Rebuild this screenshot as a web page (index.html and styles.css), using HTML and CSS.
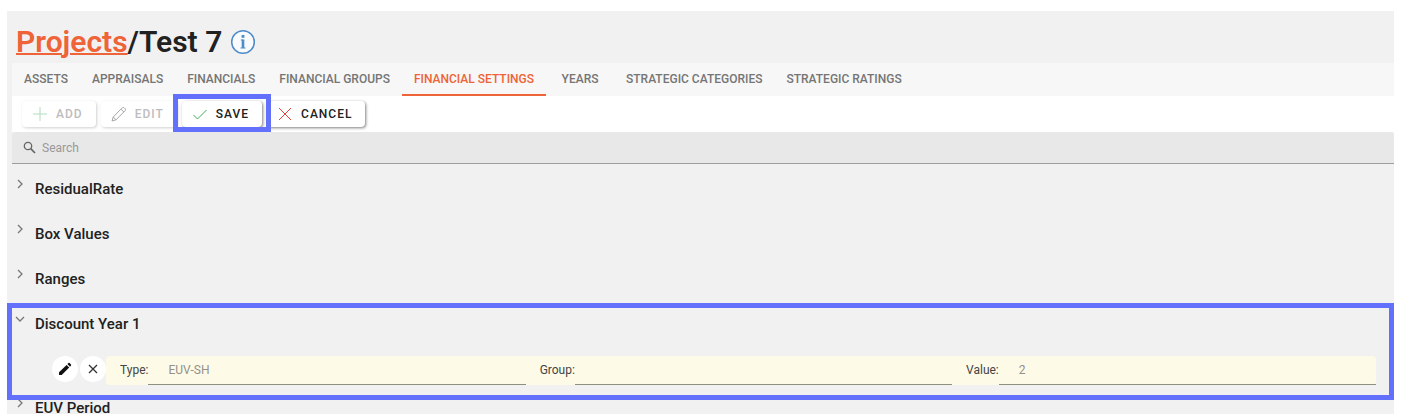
FILE: index.html
```html
<!DOCTYPE html>
<html lang="en">
<head>
<meta charset="utf-8">
<title>Projects / Test 7</title>
<link rel="stylesheet" href="styles.css">
</head>
<body>
<main class="page">
  <header class="page-header">
    <h1 class="title"><a class="title-link" href="#">Projects</a>/Test 7</h1>
    <button class="info" type="button" aria-label="Information">
      <svg width="26" height="26" viewBox="0 0 26 26" fill="none" stroke="#4c8ccb">
        <circle cx="13" cy="13" r="11.3" stroke-width="1.5" fill="#f8fafc"/>
        <path d="M13 10.5V19" stroke-width="2.6"/>
        <path d="M13 6V8.8" stroke-width="2.8"/>
        <path d="M10.8 11H13M10.5 19H15.5" stroke-width="1"/>
      </svg>
    </button>
  </header>
  <nav class="tabs">
    <a class="tab" href="#">ASSETS</a>
    <a class="tab" href="#">APPRAISALS</a>
    <a class="tab" href="#">FINANCIALS</a>
    <a class="tab" href="#">FINANCIAL GROUPS</a>
    <a class="tab tab-active" href="#" aria-current="page">FINANCIAL SETTINGS</a>
    <a class="tab" href="#">YEARS</a>
    <a class="tab" href="#">STRATEGIC CATEGORIES</a>
    <a class="tab" href="#">STRATEGIC RATINGS</a>
  </nav>
  <div class="toolbar">
    <button class="btn" type="button" disabled>
      <svg class="icon" viewBox="0 0 16 16" stroke="#3fae5c"><path d="M8 1V15M1 8H15"/></svg>ADD
    </button>
    <button class="btn" type="button" disabled>
      <svg class="icon" viewBox="0 0 16 16" stroke="#222"><path d="M1 15L2.2 11L11.3 1.8Q12.3 .9 13.3 1.9L14.1 2.7Q15 3.7 14.2 4.6L5 13.8ZM10 3.2L12.8 6M2.2 11L5 13.8"/></svg>EDIT
    </button>
    <div class="marked">
      <button class="btn" type="button">
        <svg class="icon" viewBox="0 0 16 16" stroke="#3fae5c"><path d="M1.5 9L5.5 13L14.5 4"/></svg>SAVE
      </button>
      <span class="marker marker-button"></span>
    </div>
    <button class="btn" type="button">
      <svg class="icon" viewBox="0 0 16 16" stroke="#e0413c"><path d="M2 2L14 14M14 2L2 14"/></svg>CANCEL
    </button>
  </div>
  <label class="search">
    <svg width="14" height="14" viewBox="0 0 14 14" fill="none" stroke="#666"><circle cx="5" cy="5" r="3.7" stroke-width="1.3"/><path d="M7.7 7.7L12 12" stroke-width="1.7"/></svg>
    <input class="search-input" type="text" placeholder="Search" aria-label="Search">
  </label>
  <div class="groups">
    <section class="group">
      <button class="group-head" type="button" aria-expanded="false"><svg class="chevron" viewBox="0 0 10 10"><path d="M3 1L7 5L3 9"/></svg><span class="group-name">ResidualRate</span></button>
    </section>
    <section class="group">
      <button class="group-head" type="button" aria-expanded="false"><svg class="chevron" viewBox="0 0 10 10"><path d="M3 1L7 5L3 9"/></svg><span class="group-name">Box Values</span></button>
    </section>
    <section class="group">
      <button class="group-head" type="button" aria-expanded="false"><svg class="chevron" viewBox="0 0 10 10"><path d="M3 1L7 5L3 9"/></svg><span class="group-name">Ranges</span></button>
    </section>
    <section class="group marked">
      <button class="group-head" type="button" aria-expanded="true"><svg class="chevron" viewBox="0 0 10 10"><path d="M1 3L5 7L9 3"/></svg><span class="group-name">Discount Year 1</span></button>
      <div class="entry">
        <button class="round" type="button" aria-label="Edit row">
          <svg width="14" height="14" viewBox="0 0 14 14" fill="#111"><path d="M1 13V10.2L8.6 2.9L11.2 5.5L3.7 13ZM9.4 2.1L10.5 1Q11 .6 11.6 1L13 2.4Q13.4 3 13 3.5L12 4.7Z"/></svg>
        </button>
        <button class="round" type="button" aria-label="Remove row">
          <svg width="14" height="14" viewBox="0 0 14 14" fill="none" stroke="#333" stroke-width="1.3"><path d="M3 3L11 11M11 3L3 11"/></svg>
        </button>
        <div class="fields">
          <label class="field-label" for="type">Type:</label>
          <input class="field-input" id="type" type="text" value="EUV-SH">
          <label class="field-label" for="group">Group:</label>
          <input class="field-input" id="group" type="text">
          <label class="field-label" for="value">Value:</label>
          <input class="field-input" id="value" type="text" value="2">
        </div>
      </div>
      <span class="marker marker-group"></span>
    </section>
    <section class="group">
      <button class="group-head" type="button" aria-expanded="false"><svg class="chevron" viewBox="0 0 10 10"><path d="M3 1L7 5L3 9"/></svg><span class="group-name">EUV Period</span></button>
    </section>
  </div>
</main>
</body>
</html>
```
FILE: styles.css
```css
* {
  box-sizing: border-box;
}

body {
  margin: 0;
  height: 100vh;
  padding: 11px 11px 0 7px;
  overflow: hidden;
  background: #fff;
  color: #212121;
  font-family: Roboto, "Liberation Sans", sans-serif;
}

button,
input {
  font-family: inherit;
  border: 0;
  padding: 0;
  margin: 0;
  background: none;
  color: inherit;
}

.page {
  min-height: 100%;
  padding-left: 5px;
  background: #f1f1f1;
}

.page-header {
  display: flex;
  align-items: center;
  gap: 8px;
  height: 52px;
  padding: 10px 0 0 4px;
}

.title {
  margin: 0;
  font-size: 30px;
  line-height: 36px;
  font-weight: 600;
}

.title-link {
  color: #ee6338;
  text-decoration-thickness: 2px;
}

.info {
  display: flex;
}

.tabs {
  display: flex;
  height: 33px;
  background: #f7f7f7;
}

.tab {
  min-width: 68px;
  padding: 0 12px;
  border-bottom: 2px solid transparent;
  color: #757575;
  font-size: 12px;
  line-height: 32px;
  font-weight: 500;
  text-align: center;
  text-decoration: none;
}

.tab-active {
  color: #ee6338;
  border-color: #ee6338;
}

.toolbar {
  display: flex;
  align-items: center;
  gap: 5px;
  height: 36px;
  padding-left: 10px;
  background: #fff;
}

.btn {
  display: flex;
  align-items: center;
  gap: 8px;
  height: 26px;
  padding: 0 13px 0 10px;
  border-radius: 4px;
  background: #fff;
  box-shadow: 1px 1px 3px #00000080;
  font-size: 12px;
  font-weight: 500;
  letter-spacing: 1px;
}

.btn:disabled {
  color: #bdbdbd;
  box-shadow: 1px 1px 3px #00000030;
}

.icon {
  width: 16px;
  height: 16px;
  fill: none;
}

.btn:disabled .icon {
  opacity: .4;
}

.marked {
  position: relative;
}

.marker {
  position: absolute;
  border: 5px solid #6370fb;
  pointer-events: none;
}

.marker-button {
  inset: -7px -9px -5px -9px;
}

.marker-group {
  inset: 2px 0 -15px -5px;
}

.search {
  display: flex;
  align-items: center;
  gap: 5px;
  height: 32px;
  padding-left: 11px;
  border-bottom: 1px solid #9e9e9e;
  border-radius: 4px 4px 0 0;
  background: #e8e8e8;
}

.search-input {
  flex: 1;
  font-size: 12px;
  outline: 0;
}

.search-input::placeholder {
  color: #999;
  opacity: 1;
}

.groups {
  padding-top: 2px;
}

.group-head {
  display: flex;
  align-items: flex-start;
  gap: 10px;
  width: 100%;
  height: 45px;
  padding: 13px 0 0 3px;
  text-align: left;
}

.chevron {
  width: 10px;
  height: 10px;
  fill: none;
  stroke: #777;
  stroke-width: 1.3;
}

.group-name {
  padding-top: 1px;
  font-size: 15px;
  line-height: 18px;
  font-weight: 500;
}

.entry {
  display: flex;
  align-items: flex-start;
  padding: 10px 18px 0 40px;
}

.round {
  display: flex;
  align-items: center;
  justify-content: center;
  width: 26px;
  height: 26px;
  margin-right: 2px;
  border-radius: 50%;
  background: #fff;
}

.round + .round {
  margin-right: 0;
}

.fields {
  display: grid;
  grid-template-columns: auto 1fr auto 1fr auto 1fr;
  flex: 1;
  height: 29px;
  border-radius: 4px;
  background: #fdfae7;
}

.field-label {
  padding-left: 14px;
  font-size: 12px;
  line-height: 29px;
  color: #444;
}

.field-input {
  min-width: 0;
  padding-left: 20px;
  border-bottom: 1px solid #8f8f80;
  color: #93918a;
  font-size: 12px;
  outline: 0;
}
```
